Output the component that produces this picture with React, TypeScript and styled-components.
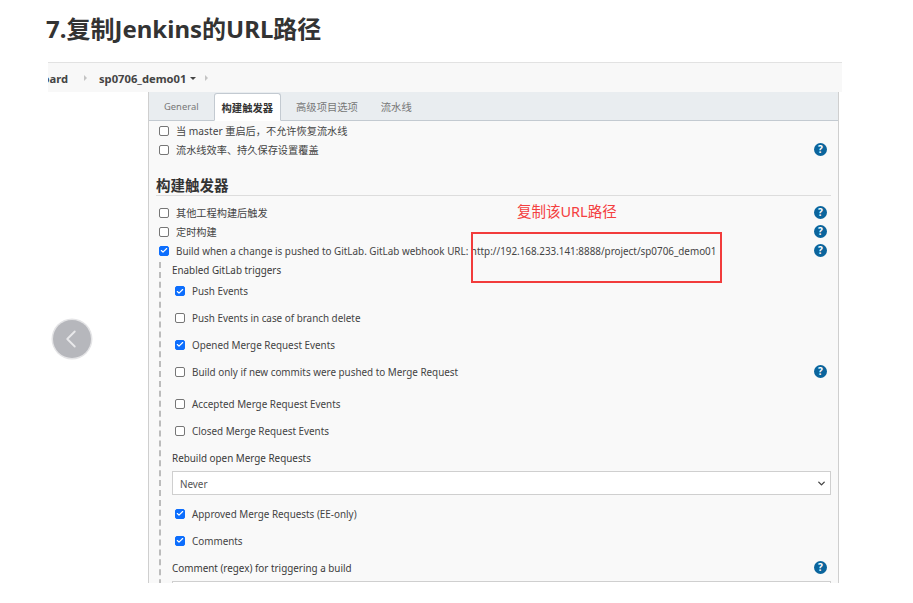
import React from 'react';
import styled, { createGlobalStyle } from 'styled-components';
import { Check, ChevronDown, ChevronLeft } from 'lucide-react';

const GlobalStyle = createGlobalStyle`
  html, body {
    margin: 0;
    padding: 0;
    background: #ffffff;
    overflow: hidden;
  }
  body {
    font-family: "Noto Sans", "Noto Sans CJK SC", sans-serif;
    color: #333333;
  }
`;

const Page = styled.div`
  position: relative;
  width: 913px;
  height: 603px;
  overflow: hidden;
`;

const Title = styled.h1`
  margin: 0;
  padding: 12px 0 0 46px;
  height: 62px;
  box-sizing: border-box;
  font-size: 24px;
  line-height: 34px;
  font-weight: 700;
  color: #333333;
`;

const Shot = styled.div`
  margin-left: 48px;
  width: 794px;
  height: 521px;
  overflow: hidden;
`;

const Breadcrumb = styled.div`
  display: flex;
  align-items: center;
  height: 30px;
  box-sizing: border-box;
  padding-top: 1px;
  background: #f8f8f8;
  border-top: 1px solid #e2e2e2;
  font-size: 11.2px;
  font-weight: 700;
  color: #444444;
`;

const ClippedCrumb = styled.div`
  display: flex;
  justify-content: flex-end;
  width: 20px;
  overflow: hidden;
  white-space: nowrap;
`;

const Crumb = styled.span`
  margin-left: 12px;
`;

const Caret = styled.span`
  width: 0;
  height: 0;
  margin: 1px 0 0 4px;
  border-left: 3px solid transparent;
  border-right: 3px solid transparent;
  border-top: 3px solid #444444;
`;

const Separator = styled.span<{ $left: number }>`
  width: 0;
  height: 0;
  margin-left: ${p => p.$left}px;
  border-top: 3px solid transparent;
  border-bottom: 3px solid transparent;
  border-left: 3px solid #c4c4c4;
`;

const Panel = styled.div`
  margin-left: 100px;
  width: 691px;
  height: 491px;
  box-sizing: border-box;
  background: #f9f9f9;
  border-left: 1px solid #cfcfcf;
  border-right: 1px solid #cfcfcf;
  overflow: hidden;
`;

const TabBar = styled.div`
  display: flex;
  align-items: flex-end;
  gap: 7px;
  height: 29px;
  box-sizing: border-box;
  padding: 1px 0 0 7px;
  background: #e9edf0;
  border-bottom: 1px solid #c3cad1;
`;

const Tab = styled.div<{ $active?: boolean }>`
  height: 28px;
  box-sizing: border-box;
  margin-bottom: ${p => (p.$active ? '-1px' : '0')};
  padding: 0 7px;
  font-size: 10.3px;
  line-height: 28px;
  white-space: nowrap;
  color: ${p => (p.$active ? '#333333' : '#777777')};
  font-weight: ${p => (p.$active ? 600 : 400)};
  background: ${p => (p.$active ? '#ffffff' : 'transparent')};
  border: 1px solid ${p => (p.$active ? '#c3cad1' : 'transparent')};
  border-bottom-color: ${p => (p.$active ? '#ffffff' : 'transparent')};
  border-radius: 3px 3px 0 0;
`;

const LatinTab = styled(Tab)`
  font-size: 9.4px;
`;

const Body = styled.div`
  padding: 0 7px;
`;

const Row = styled.div<{ $height: number; $indent?: number; $top?: number; $cjk?: boolean }>`
  display: flex;
  align-items: center;
  gap: 7px;
  height: ${p => p.$height}px;
  margin-top: ${p => p.$top ?? 0}px;
  padding-left: ${p => p.$indent ?? 3}px;
  font-size: ${p => (p.$cjk ? 10.2 : 9.87)}px;
  color: #444444;
  white-space: nowrap;
`;

const Box = styled.span<{ $checked?: boolean }>`
  display: flex;
  align-items: center;
  justify-content: center;
  flex: none;
  width: 10px;
  height: 10px;
  box-sizing: border-box;
  border-radius: 2px;
  color: #ffffff;
  background: ${p => (p.$checked ? '#0d6efd' : '#ffffff')};
  border: 1px solid ${p => (p.$checked ? '#0d6efd' : '#767676')};
`;

const Help = styled.span`
  flex: none;
  width: 13px;
  height: 13px;
  margin-left: auto;
  margin-right: 4px;
  border-radius: 50%;
  background: #0b659d;
  color: #ffffff;
  font-size: 10px;
  font-weight: 700;
  line-height: 13px;
  text-align: center;
`;

const SectionHeading = styled.div`
  height: 25px;
  box-sizing: border-box;
  margin: 12px 0 7px;
  font-size: 14.5px;
  line-height: 28px;
  font-weight: 700;
  color: #333333;
  border-bottom: 1px solid #dddddd;
`;

const Nested = styled.div`
  margin: 2px 0 0 3px;
  padding-left: 11px;
  border-left: 2px dashed #bcbcbc;
`;

const FieldLabel = styled.div<{ $height: number }>`
  display: flex;
  align-items: center;
  height: ${p => p.$height}px;
  font-size: 9.87px;
  color: #3a3a3a;
  white-space: nowrap;
`;

const SelectBox = styled.div`
  display: flex;
  align-items: center;
  justify-content: space-between;
  height: 24px;
  box-sizing: border-box;
  margin-bottom: 5px;
  padding: 1px 3px 0 7px;
  background: #ffffff;
  border: 1px solid #cfcfcf;
  font-size: 9.87px;
  color: #555555;
`;

const TextInput = styled.div`
  height: 24px;
  box-sizing: border-box;
  background: #ffffff;
  border: 1px solid #cfcfcf;
`;

const PrevButton = styled.div`
  position: absolute;
  left: 53px;
  top: 320px;
  display: flex;
  align-items: center;
  justify-content: center;
  width: 38px;
  height: 38px;
  box-sizing: border-box;
  padding-right: 3px;
  border-radius: 50%;
  background: #b6b7bc;
  box-shadow: 0 0 0 1.5px #e4e4e6;
  color: #e8e8ea;
`;

const Note = styled.div`
  position: absolute;
  left: 517px;
  top: 201px;
  font-size: 14.5px;
  line-height: 20px;
  color: #f44040;
`;

const Highlight = styled.div`
  position: absolute;
  left: 471px;
  top: 232px;
  width: 251px;
  height: 51px;
  box-sizing: border-box;
  border: 2px solid #f23c3c;
`;

const CheckRow = ({
  label,
  checked,
  help,
  height,
  indent,
  top,
  cjk,
}: {
  label: string;
  checked?: boolean;
  help?: boolean;
  height: number;
  indent?: number;
  top?: number;
  cjk?: boolean;
}) => (
  <Row $height={height} $indent={indent} $top={top} $cjk={cjk}>
    <Box $checked={checked}>{checked && <Check size={9} strokeWidth={3.5} />}</Box>
    <span>{label}</span>
    {help && <Help>?</Help>}
  </Row>
);

export default function App() {
  return (
    <Page>
      <GlobalStyle />
      <Title>7.复制Jenkins的URL路径</Title>
      <Shot>
        <Breadcrumb>
          <ClippedCrumb>Dashboard</ClippedCrumb>
          <Separator $left={16} />
          <Crumb>sp0706_demo01</Crumb>
          <Caret />
          <Separator $left={9} />
        </Breadcrumb>
        <Panel>
          <TabBar>
            <LatinTab>General</LatinTab>
            <Tab $active>构建触发器</Tab>
            <Tab>高级项目选项</Tab>
            <Tab>流水线</Tab>
          </TabBar>
          <Body>
            <CheckRow height={19} cjk label="当 master 重启后，不允许恢复流水线" />
            <CheckRow height={19} cjk label="流水线效率、持久保存设置覆盖" help />
            <SectionHeading>构建触发器</SectionHeading>
            <CheckRow height={19} cjk label="其他工程构建后触发" help />
            <CheckRow height={19} cjk label="定时构建" help />
            <CheckRow
              height={19}
              checked
              help
              label="Build when a change is pushed to GitLab. GitLab webhook URL: http://192.168.233.141:8888/project/sp0706_demo01"
            />
            <Nested>
              <FieldLabel $height={16}>Enabled GitLab triggers</FieldLabel>
              <CheckRow height={26} indent={3} checked label="Push Events" />
              <CheckRow height={27} indent={3} label="Push Events in case of branch delete" />
              <CheckRow height={27} indent={3} checked label="Opened Merge Request Events" />
              <CheckRow height={27} indent={3} help label="Build only if new commits were pushed to Merge Request" />
              <CheckRow height={27} indent={3} top={5} label="Accepted Merge Request Events" />
              <CheckRow height={27} indent={3} label="Closed Merge Request Events" />
              <FieldLabel $height={27}>Rebuild open Merge Requests</FieldLabel>
              <SelectBox>
                Never
                <ChevronDown size={11} strokeWidth={3} color="#444444" />
              </SelectBox>
              <CheckRow height={27} indent={3} checked label="Approved Merge Requests (EE-only)" />
              <CheckRow height={27} indent={3} checked label="Comments" />
              <Row $height={27} $indent={0}>
                <FieldLabel $height={27}>Comment (regex) for triggering a build</FieldLabel>
                <Help>?</Help>
              </Row>
              <TextInput />
            </Nested>
          </Body>
        </Panel>
      </Shot>
      <PrevButton>
        <ChevronLeft size={30} strokeWidth={1.5} />
      </PrevButton>
      <Note>复制该URL路径</Note>
      <Highlight />
    </Page>
  );
}
